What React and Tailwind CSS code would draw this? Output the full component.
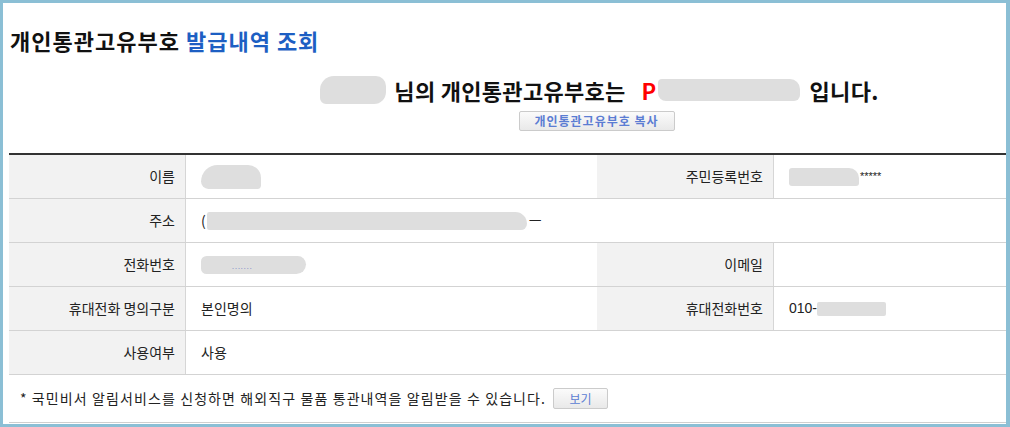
import React from "react";

const font = { fontFamily: '"Noto Sans CJK KR", "Noto Sans", sans-serif' };

function Blob({ className }) {
  return <span className={"inline-block bg-[#dedede] align-middle " + className} />;
}

function Label({ children, w = "w-[177px]" }) {
  return (
    <div className={`${w} shrink-0 bg-[#f2f2f2] border-r border-[#d6d6d6] flex items-center justify-end pr-[10px] text-[14px] text-[#222]`}>
      {children}
    </div>
  );
}

function Value({ children, className = "" }) {
  return (
    <div className={"flex items-center pl-[15px] text-[14px] text-[#222] " + className}>{children}</div>
  );
}

export default function App() {
  return (
    <div
      style={font}
      className="w-[1010px] h-[427px] bg-white border-[3px] border-r-4 border-[#8bbfd5] flex flex-col overflow-hidden"
    >
      <div className="pl-[7px] mt-[22px] h-[30px] flex items-center text-[22px] tracking-[1px] font-bold leading-[30px] text-[#111] whitespace-nowrap">
        개인통관고유부호&nbsp;<span className="text-[#1d5fc3]">발급내역 조회</span>
      </div>

      <div className="pl-[190px] mt-[20px] flex flex-col items-center">
        <div className="h-[30px] flex items-center text-[22px] tracking-[0.3px] font-bold text-[#111] whitespace-nowrap">
          <Blob className="w-[66px] h-[28px] rounded-[14px_10px_12px_6px]" />
          <span className="ml-[8px]">님의 개인통관고유부호는</span>
          <span className="ml-[16px] text-[#f00]">P</span>
          <Blob className="w-[142px] h-[22px] rounded-[4px_10px_6px_8px] ml-[1px]" />
          <span className="ml-[10px]">입니다.</span>
        </div>
        <button className="-ml-[6px] mt-[6px] h-[20px] w-[156px] border border-[#cbcbcb] rounded-[2px] bg-gradient-to-b from-[#fbfbfb] to-[#e9e9e9] text-[12px] tracking-[1px] font-bold text-[#5b7dd3] leading-[18px]">
          개인통관고유부호 복사
        </button>
      </div>

      <div className="ml-[6px] mt-[22px] border-t-2 border-[#333] flex flex-col">
        <div className="h-[44px] flex border-b border-[#d3d3d3]">
          <Label>이름</Label>
          <Value className="w-[411px] pl-[6px]">
            <Blob className="w-[60px] h-[24px] rounded-[18px_14px_4px_8px]" />
          </Value>
          <Label>주민등록번호</Label>
          <Value className="pl-[10px]">
            <Blob className="w-[70px] h-[18px] rounded-[3px_10px_3px_3px]" />
            <span
              className="text-[11px] leading-none ml-[1px]"
              style={{ fontFamily: '"Liberation Sans", sans-serif' }}
            >
              *****
            </span>
          </Value>
        </div>

        <div className="h-[44px] flex border-b border-[#d3d3d3]">
          <Label>주소</Label>
          <Value>
            <span>(</span>
            <Blob className="w-[320px] h-[18px] rounded-[6px_30px_16px_6px] ml-[1px]" />
            <span className="ml-[2px]">ㅡ</span>
          </Value>
        </div>

        <div className="h-[44px] flex border-b border-[#d3d3d3]">
          <Label>전화번호</Label>
          <Value className="w-[411px] pl-[11px]">
            <span className="relative inline-block w-[105px] h-[18px] bg-[#dedede] rounded-[8px_12px_14px_8px]">
              <span className="absolute left-[31px] top-[7px] text-[7px] leading-none tracking-[1px] text-[#7a88c8]">.......</span>
            </span>
          </Value>
          <Label>이메일</Label>
          <Value />
        </div>

        <div className="h-[44px] flex border-b border-[#d3d3d3]">
          <Label>휴대전화 명의구분</Label>
          <Value className="w-[411px]">본인명의</Value>
          <Label>휴대전화번호</Label>
          <Value>
            <span style={{ fontFamily: '"Liberation Sans", sans-serif' }}>010-</span>
            <Blob className="w-[69px] h-[14px] rounded-[2px]" />
          </Value>
        </div>

        <div className="h-[44px] flex border-b border-[#d3d3d3]">
          <Label>사용여부</Label>
          <Value>사용</Value>
        </div>

        <div className="h-[48px] flex items-center pl-[11px] text-[14px] tracking-[1.1px] text-[#222] border-b border-[#cfcfcf] whitespace-nowrap">
          <span>* 국민비서 알림서비스를 신청하면 해외직구 물품 통관내역을 알림받을 수 있습니다.</span>
          <button className="ml-[7px] h-[21px] w-[55px] border border-[#cbcbcb] rounded-[2px] bg-gradient-to-b from-[#fbfbfb] to-[#e9e9e9] text-[12px] tracking-normal text-[#5b7dd3] leading-[19px]">
            보기
          </button>
        </div>
      </div>
    </div>
  );
}
